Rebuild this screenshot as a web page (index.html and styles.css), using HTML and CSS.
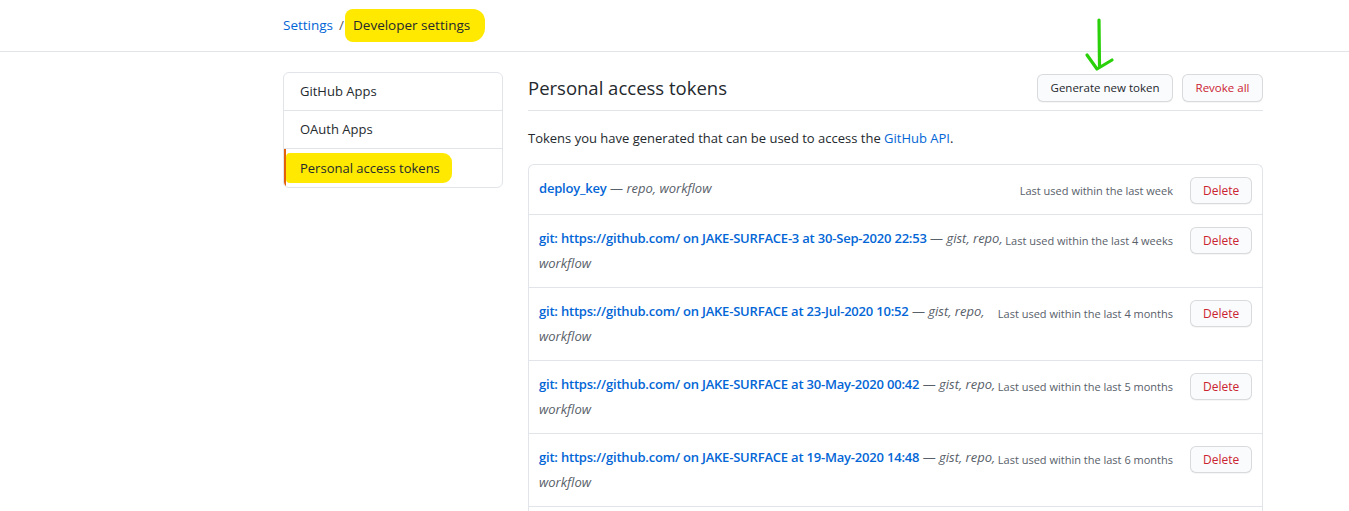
FILE: index.html
```html
<!DOCTYPE html>
<html lang="en">
<head>
<meta charset="utf-8">
<title>Personal access tokens</title>
<link rel="stylesheet" href="styles.css">
</head>
<body>
<header class="topbar">
  <nav class="crumbs">
    <a class="link" href="#">Settings</a>
    <span class="sep">/</span>
    <span class="marker crumb-current">Developer settings</span>
  </nav>
</header>

<div class="layout">
  <aside class="menu">
    <a class="menu-item" href="#">GitHub Apps</a>
    <a class="menu-item" href="#">OAuth Apps</a>
    <a class="menu-item selected" href="#"><span class="marker marker-side">Personal access tokens</span></a>
  </aside>

  <main class="content">
    <div class="subhead">
      <h2 class="subhead-title">Personal access tokens</h2>
      <div class="subhead-actions">
        <button class="btn">Generate new token</button>
        <button class="btn btn-danger">Revoke all</button>
      </div>
    </div>
    <p class="intro">Tokens you have generated that can be used to access the <a class="link" href="#">GitHub API</a>.</p>

    <div class="box">
      <div class="row">
        <div class="row-right"><span class="last-used">Last used within the last week</span><button class="btn btn-sm btn-danger">Delete</button></div>
        <a class="token" href="#">deploy_key</a> <span class="scopes">— <em>repo, workflow</em></span>
      </div>
      <div class="row">
        <div class="row-right"><span class="last-used">Last used within the last 4 weeks</span><button class="btn btn-sm btn-danger">Delete</button></div>
        <a class="token" href="#">git: https://github.com/ on JAKE-SURFACE-3 at 30-Sep-2020 22:53</a> <span class="scopes">— <em>gist, repo, workflow</em></span>
      </div>
      <div class="row">
        <div class="row-right"><span class="last-used">Last used within the last 4 months</span><button class="btn btn-sm btn-danger">Delete</button></div>
        <a class="token" href="#">git: https://github.com/ on JAKE-SURFACE at 23-Jul-2020 10:52</a> <span class="scopes">— <em>gist, repo, workflow</em></span>
      </div>
      <div class="row">
        <div class="row-right"><span class="last-used">Last used within the last 5 months</span><button class="btn btn-sm btn-danger">Delete</button></div>
        <a class="token" href="#">git: https://github.com/ on JAKE-SURFACE at 30-May-2020 00:42</a> <span class="scopes">— <em>gist, repo, workflow</em></span>
      </div>
      <div class="row">
        <div class="row-right"><span class="last-used">Last used within the last 6 months</span><button class="btn btn-sm btn-danger">Delete</button></div>
        <a class="token" href="#">git: https://github.com/ on JAKE-SURFACE at 19-May-2020 14:48</a> <span class="scopes">— <em>gist, repo, workflow</em></span>
      </div>
      <div class="row">
        <div class="row-right"><span class="last-used">Last used within the last 6 months</span><button class="btn btn-sm btn-danger">Delete</button></div>
        <a class="token" href="#">git: https://github.com/ on JAKE-SURFACE at 12-May-2020 09:30</a> <span class="scopes">— <em>gist, repo, workflow</em></span>
      </div>
    </div>
  </main>
</div>

<svg class="arrow" width="40" height="60" viewBox="0 0 40 60" aria-hidden="true">
  <path d="M19 2 L19.5 48" stroke="#2ad10a" stroke-width="3.2" fill="none" stroke-linecap="round"/>
  <path d="M7 37 L17 51 L32 42" stroke="#2ad10a" stroke-width="3.2" fill="none" stroke-linecap="round" stroke-linejoin="round"/>
</svg>
</body>
</html>
```

FILE: styles.css
```css
* { box-sizing: border-box; }

body {
  margin: 0;
  background: #fff;
  color: #24292e;
  font-family: "Open Sans", "Noto Sans", "Liberation Sans", sans-serif;
  font-size: 13px;
  line-height: 1.5;
  position: relative;
}

.link { color: #0366d6; text-decoration: none; }

.topbar {
  height: 52px;
  border-bottom: 1px solid #e1e4e8;
  display: flex;
  align-items: center;
  padding-left: 283px;
}

.crumbs {
  display: flex;
  align-items: center;
  font-size: 13.5px;
}

.sep { color: #586069; margin: 0 1px 0 6px; }

.marker {
  background: #ffe900;
  border-radius: 9px;
}

.crumb-current {
  padding: 6px 15px 6px 8px;
  color: #24292e;
  border-radius: 8px 12px 14px 8px;
}

.layout {
  display: flex;
  padding-left: 283px;
  padding-top: 20px;
}

.menu {
  width: 220px;
  flex: none;
  border: 1px solid #e1e4e8;
  border-radius: 6px;
  align-self: flex-start;
  overflow: hidden;
}

.menu-item {
  display: block;
  height: 38px;
  line-height: 37px;
  padding-left: 16px;
  color: #24292e;
  text-decoration: none;
  border-bottom: 1px solid #e1e4e8;
}

.menu-item:last-child { border-bottom: 0; }

.menu-item.selected {
  border-left: 2px solid #e36209;
  padding-left: 0;
}

.marker-side {
  display: inline-block;
  line-height: 30px;
  padding: 0 12px 0 14px;
  margin-top: 4px;
  vertical-align: top;
  border-radius: 4px 9px 9px 4px;
}

.content {
  width: 735px;
  margin-left: 25px;
}

.subhead {
  display: flex;
  align-items: center;
  justify-content: space-between;
  border-bottom: 1px solid #e1e4e8;
  height: 39px;
  padding-bottom: 7px;
}

.subhead-title {
  margin: 0;
  font-size: 18.5px;
  font-weight: 400;
}

.subhead-actions { display: flex; gap: 9px; }

.btn {
  font-family: inherit;
  font-size: 11.5px;
  font-weight: 500;
  color: #24292e;
  background: #fafbfc;
  border: 1px solid rgba(27, 31, 35, 0.15);
  border-radius: 6px;
  height: 28px;
  padding: 0 12px;
  line-height: 26px;
  box-shadow: 0 1px 0 rgba(27, 31, 35, 0.04);
}

.subhead-actions .btn:first-child { width: 136px; }
.subhead-actions .btn-danger { width: 81px; }

.btn-danger { color: #cb2431; }

.btn-sm {
  height: 27px;
  line-height: 25px;
  padding: 0 12px;
  margin-left: 17px;
  width: 62px;
  font-size: 12px;
}

.intro {
  margin: 15px 0 13px;
  line-height: 25px;
}

.box {
  border: 1px solid #e1e4e8;
  border-radius: 6px 6px 0 0;
  border-bottom: 0;
}

.row {
  min-height: 50px;
  padding: 11px 10px 11px;
  border-bottom: 1px solid #e1e4e8;
  line-height: 25px;
}

.row-right {
  float: right;
  display: flex;
  align-items: center;
  height: 27px;
  margin-top: 1px;
}

.last-used {
  font-size: 11px;
  color: #586069;
}

.token {
  color: #0366d6;
  font-weight: 600;
  text-decoration: none;
  letter-spacing: -0.2px;
}

.scopes { color: #586069; }
.scopes em { font-style: italic; }

.arrow {
  position: absolute;
  left: 1080px;
  top: 18px;
}
```
